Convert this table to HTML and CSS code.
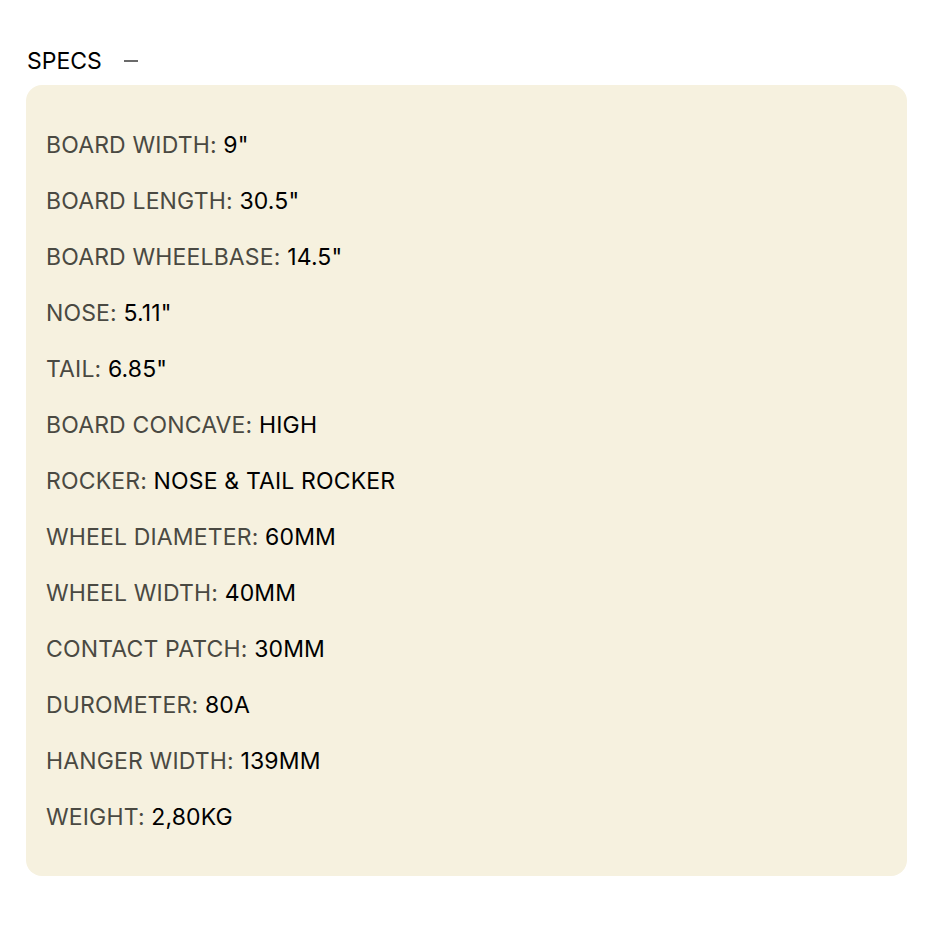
FILE: index.html
```html
<!DOCTYPE html>
<html>
<head>
<meta charset="utf-8">
<link rel="stylesheet" href="styles.css">
</head>
<body>
<section class="specs">
  <div class="specs-head">
    <span class="specs-title">SPECS</span>
    <span class="specs-toggle"></span>
  </div>
  <div class="specs-panel">
    <p class="row"><span class="label">BOARD WIDTH:</span> <span class="value">9"</span></p>
    <p class="row"><span class="label">BOARD LENGTH:</span> <span class="value">30.5"</span></p>
    <p class="row"><span class="label">BOARD WHEELBASE:</span> <span class="value">14.5"</span></p>
    <p class="row"><span class="label">NOSE:</span> <span class="value">5.11"</span></p>
    <p class="row"><span class="label">TAIL:</span> <span class="value">6.85"</span></p>
    <p class="row"><span class="label">BOARD CONCAVE:</span> <span class="value">HIGH</span></p>
    <p class="row"><span class="label">ROCKER:</span> <span class="value">NOSE &amp; TAIL ROCKER</span></p>
    <p class="row"><span class="label">WHEEL DIAMETER:</span> <span class="value">60MM</span></p>
    <p class="row"><span class="label">WHEEL WIDTH:</span> <span class="value">40MM</span></p>
    <p class="row"><span class="label">CONTACT PATCH:</span> <span class="value">30MM</span></p>
    <p class="row"><span class="label">DUROMETER:</span> <span class="value">80A</span></p>
    <p class="row"><span class="label">HANGER WIDTH:</span> <span class="value">139MM</span></p>
    <p class="row"><span class="label">WEIGHT:</span> <span class="value">2,80KG</span></p>
  </div>
</section>
</body>
</html>
```
FILE: styles.css
```css
html, body {
  margin: 0;
  padding: 0;
  background: #ffffff;
}
body {
  font-family: Inter, "Liberation Sans", sans-serif;
  color: #000;
}
.specs {
  padding: 45px 0 0 26px;
  width: 881px;
}
.specs-head {
  display: flex;
  align-items: center;
  height: 32px;
  gap: 22px;
  margin-bottom: 8px;
}
.specs-title {
  font-size: 23px;
  line-height: 32px;
  padding-left: 1px;
}
.specs-toggle {
  width: 14px;
  height: 1.5px;
  background: #6a6a6a;
}
.specs-panel {
  background: #f6f1df;
  border-radius: 16px;
  padding: 32px 20px 31px 20px;
}
.row {
  margin: 0;
  font-size: 23px;
  letter-spacing: 0.15px;
  line-height: 56px;
  height: 56px;
}
.label {
  color: #4a4942;
}
.value {
  color: #000;
}
```
